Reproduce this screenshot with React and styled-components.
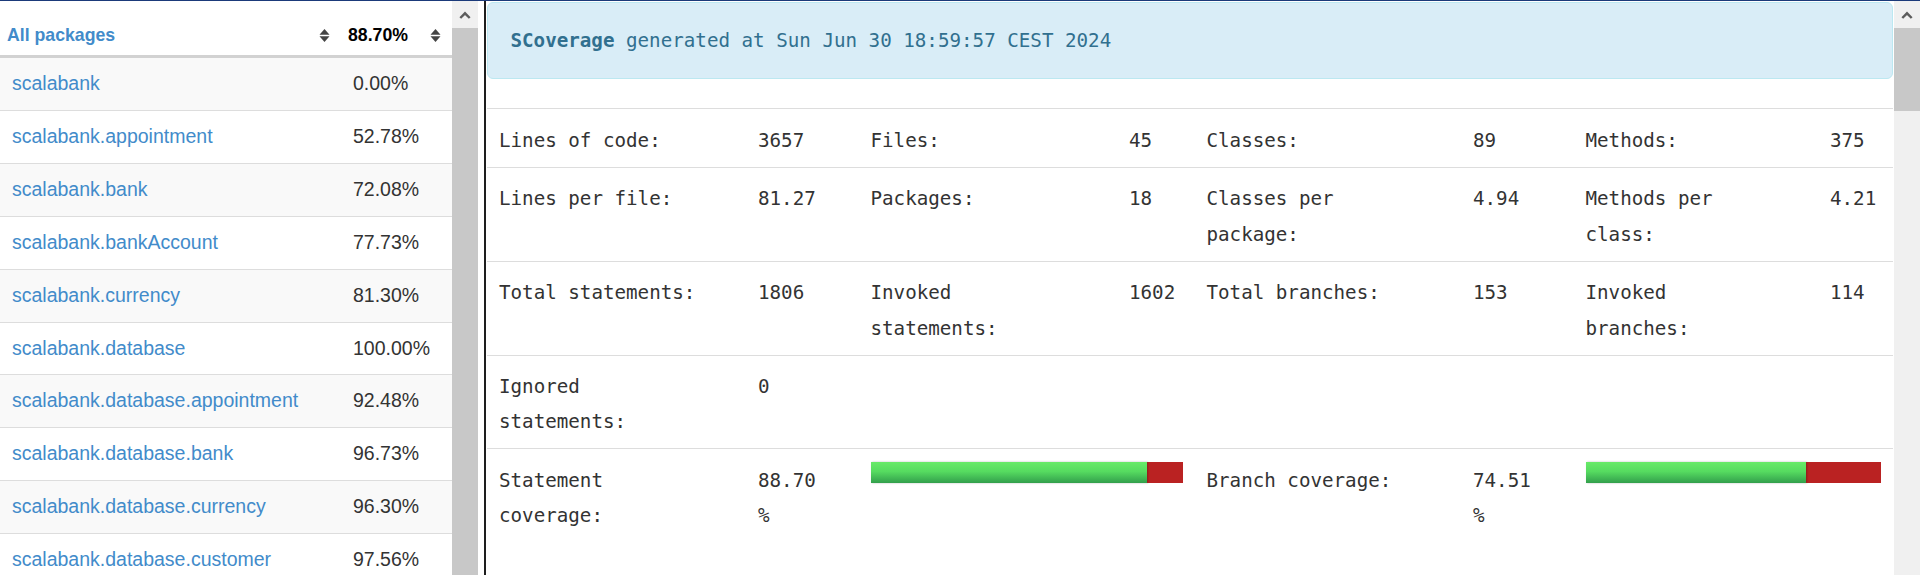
import React from 'react'
import styled, { createGlobalStyle } from 'styled-components'

const PACKAGES = [
  { name: 'scalabank', coverage: '0.00%' },
  { name: 'scalabank.appointment', coverage: '52.78%' },
  { name: 'scalabank.bank', coverage: '72.08%' },
  { name: 'scalabank.bankAccount', coverage: '77.73%' },
  { name: 'scalabank.currency', coverage: '81.30%' },
  { name: 'scalabank.database', coverage: '100.00%' },
  { name: 'scalabank.database.appointment', coverage: '92.48%' },
  { name: 'scalabank.database.bank', coverage: '96.73%' },
  { name: 'scalabank.database.currency', coverage: '96.30%' },
  { name: 'scalabank.database.customer', coverage: '97.56%' },
  { name: 'scalabank.database.interest', coverage: '95.12%' },
  { name: 'scalabank.database.loan', coverage: '94.87%' }
]

// label column widths (in ch) decide where the labels wrap
const LABEL_CH = [18, 18, 18, 16]

const STATS = [
  [['Lines of code:', '3657'], ['Files:', '45'], ['Classes:', '89'], ['Methods:', '375']],
  [['Lines per file:', '81.27'], ['Packages:', '18'], ['Classes per package:', '4.94'], ['Methods per class:', '4.21']],
  [['Total statements:', '1806'], ['Invoked statements:', '1602'], ['Total branches:', '153'], ['Invoked branches:', '114']],
  [['Ignored statements:', '0']]
]

const COVERAGE = [
  { label: 'Statement coverage:', value: 88.7, text: '88.70 %', ch: 18 },
  { label: 'Branch coverage:', value: 74.51, text: '74.51 %', ch: 18 }
]

const MONO = `'DejaVu Sans Mono', 'Liberation Mono', monospace`

const GlobalStyle = createGlobalStyle`
  html, body {
    margin: 0;
    padding: 0;
    background: #ffffff;
  }
  body {
    font-family: 'Liberation Sans', Arial, sans-serif;
    color: #333333;
  }
`

const Frameset = styled.div`
  display: flex;
  height: 575px;
  overflow: hidden;
  box-sizing: border-box;
  border-top: 1px solid #1b3a7a;
`

const OverviewFrame = styled.div`
  display: flex;
  width: 478px;
  flex-shrink: 0;
`

const PackageTable = styled.div`
  width: 452px;
  display: flex;
  flex-direction: column;
`

const HeaderRow = styled.div`
  display: grid;
  grid-template-columns: 341px 111px;
  border-bottom: 3px solid #d2d2d2;
`

const HeaderCell = styled.div`
  height: 54px;
  box-sizing: border-box;
  padding: 15px 11px 0 7px;
  display: flex;
  align-items: center;
  justify-content: space-between;
  font-size: 17.7px;
  font-weight: bold;
  color: ${p => (p.$link ? '#428bca' : '#000000')};
`

const PackageRow = styled.div`
  display: grid;
  grid-template-columns: 341px 111px;
  font-size: 19.5px;
  line-height: 27.9px;
  background: ${p => (p.$striped ? '#f9f9f9' : '#ffffff')};
  & + & {
    border-top: 1px solid #dddddd;
  }
`

const PackageCell = styled.div`
  padding: 12px;
  white-space: nowrap;
`

const PackageLink = styled.a`
  color: #428bca;
  text-decoration: none;
`

const ScrollBar = styled.div`
  width: 26px;
  flex-shrink: 0;
  display: flex;
  flex-direction: column;
  background: #f0f0f0;
`

const ScrollArrow = styled.div`
  height: 27px;
  flex-shrink: 0;
  display: flex;
  align-items: center;
  justify-content: center;
`

const ScrollThumb = styled.div`
  background: #c8c8c8;
  height: ${p => p.$size || 'auto'};
  flex: ${p => (p.$size ? 'none' : 1)};
`

const FrameDivider = styled.div`
  width: 6px;
  flex-shrink: 0;
  border-right: 2px solid #1e1e1e;
`

const DetailFrame = styled.div`
  flex: 1;
  min-width: 0;
  display: flex;
`

const DetailContent = styled.div`
  flex: 1;
  min-width: 0;
  padding: 0 1px;
  font-family: ${MONO};
  font-size: 19.2px;
`

const InfoAlert = styled.div`
  margin: 1px 0 29px;
  padding: 23px 22.5px 22px;
  line-height: 30px;
  border: 1px solid #bce8f1;
  border-radius: 6px;
  background: #d9edf7;
  color: #31708f;
`

const StatRow = styled.div`
  display: grid;
  grid-template-columns: 259px 112.5px 258.5px 77.5px 266.5px 112.5px 244.5px 1fr;
  border-top: 1px solid #dddddd;
  line-height: 35.2px;
  color: #333333;
`

const StatCell = styled.div`
  padding: 13.75px 12px 8.75px;
`

const Wrap = styled.span`
  display: block;
  max-width: ${p => p.$ch}ch;
`

const BarCell = styled.div`
  grid-column: span 2;
  padding: 12.5px 12px 0;
`

const BarTrack = styled.div`
  display: flex;
  height: 21px;
  background: #ba2222;
`

const BarFill = styled.div`
  height: 100%;
  background: linear-gradient(to bottom, #68ea68 0%, #56db60 45%, #329f4c 100%);
  box-shadow: 1px 0 2px rgba(0, 0, 0, 0.25);
`

const Chevron = () => (
  <svg width='12' height='8' viewBox='0 0 12 8'>
    <polyline points='1.3,7 6,2.3 10.7,7' fill='none' stroke='#5c5c5c' strokeWidth='2.4' />
  </svg>
)

const SortIcon = () => (
  <svg width='11' height='13' viewBox='0 0 11 13'>
    <polygon points='0.5,5.7 5.5,0 10.5,5.7' fill='#444444' />
    <polygon points='0.5,7.3 5.5,13 10.5,7.3' fill='#444444' />
  </svg>
)

const Scroller = ({ thumb }) => (
  <ScrollBar>
    <ScrollArrow>
      <Chevron />
    </ScrollArrow>
    <ScrollThumb $size={thumb} />
  </ScrollBar>
)

export default function App () {
  return (
    <>
      <GlobalStyle />
      <Frameset>
        <OverviewFrame>
          <PackageTable>
            <HeaderRow>
              <HeaderCell $link>
                All packages
                <SortIcon />
              </HeaderCell>
              <HeaderCell>
                88.70%
                <SortIcon />
              </HeaderCell>
            </HeaderRow>
            {PACKAGES.map(({ name, coverage }, i) => (
              <PackageRow key={name} $striped={i % 2 === 0}>
                <PackageCell>
                  <PackageLink href='#'>{name}</PackageLink>
                </PackageCell>
                <PackageCell>{coverage}</PackageCell>
              </PackageRow>
            ))}
          </PackageTable>
          <Scroller />
        </OverviewFrame>
        <FrameDivider />
        <DetailFrame>
          <DetailContent>
            <InfoAlert>
              <b>SCoverage</b> generated at Sun Jun 30 18:59:57 CEST 2024
            </InfoAlert>
            {STATS.map((row, r) => (
              <StatRow key={r}>
                {row.map(([label, value], c) => (
                  <React.Fragment key={label}>
                    <StatCell>
                      <Wrap $ch={LABEL_CH[c]}>{label}</Wrap>
                    </StatCell>
                    <StatCell>{value}</StatCell>
                  </React.Fragment>
                ))}
              </StatRow>
            ))}
            <StatRow>
              {COVERAGE.map(({ label, value, text, ch }) => (
                <React.Fragment key={label}>
                  <StatCell>
                    <Wrap $ch={ch}>{label}</Wrap>
                  </StatCell>
                  <StatCell>
                    <Wrap $ch={6}>{text}</Wrap>
                  </StatCell>
                  <BarCell>
                    <BarTrack>
                      <BarFill style={{ width: `${value}%` }} />
                    </BarTrack>
                  </BarCell>
                </React.Fragment>
              ))}
            </StatRow>
          </DetailContent>
          <Scroller thumb='83px' />
        </DetailFrame>
      </Frameset>
    </>
  )
}
